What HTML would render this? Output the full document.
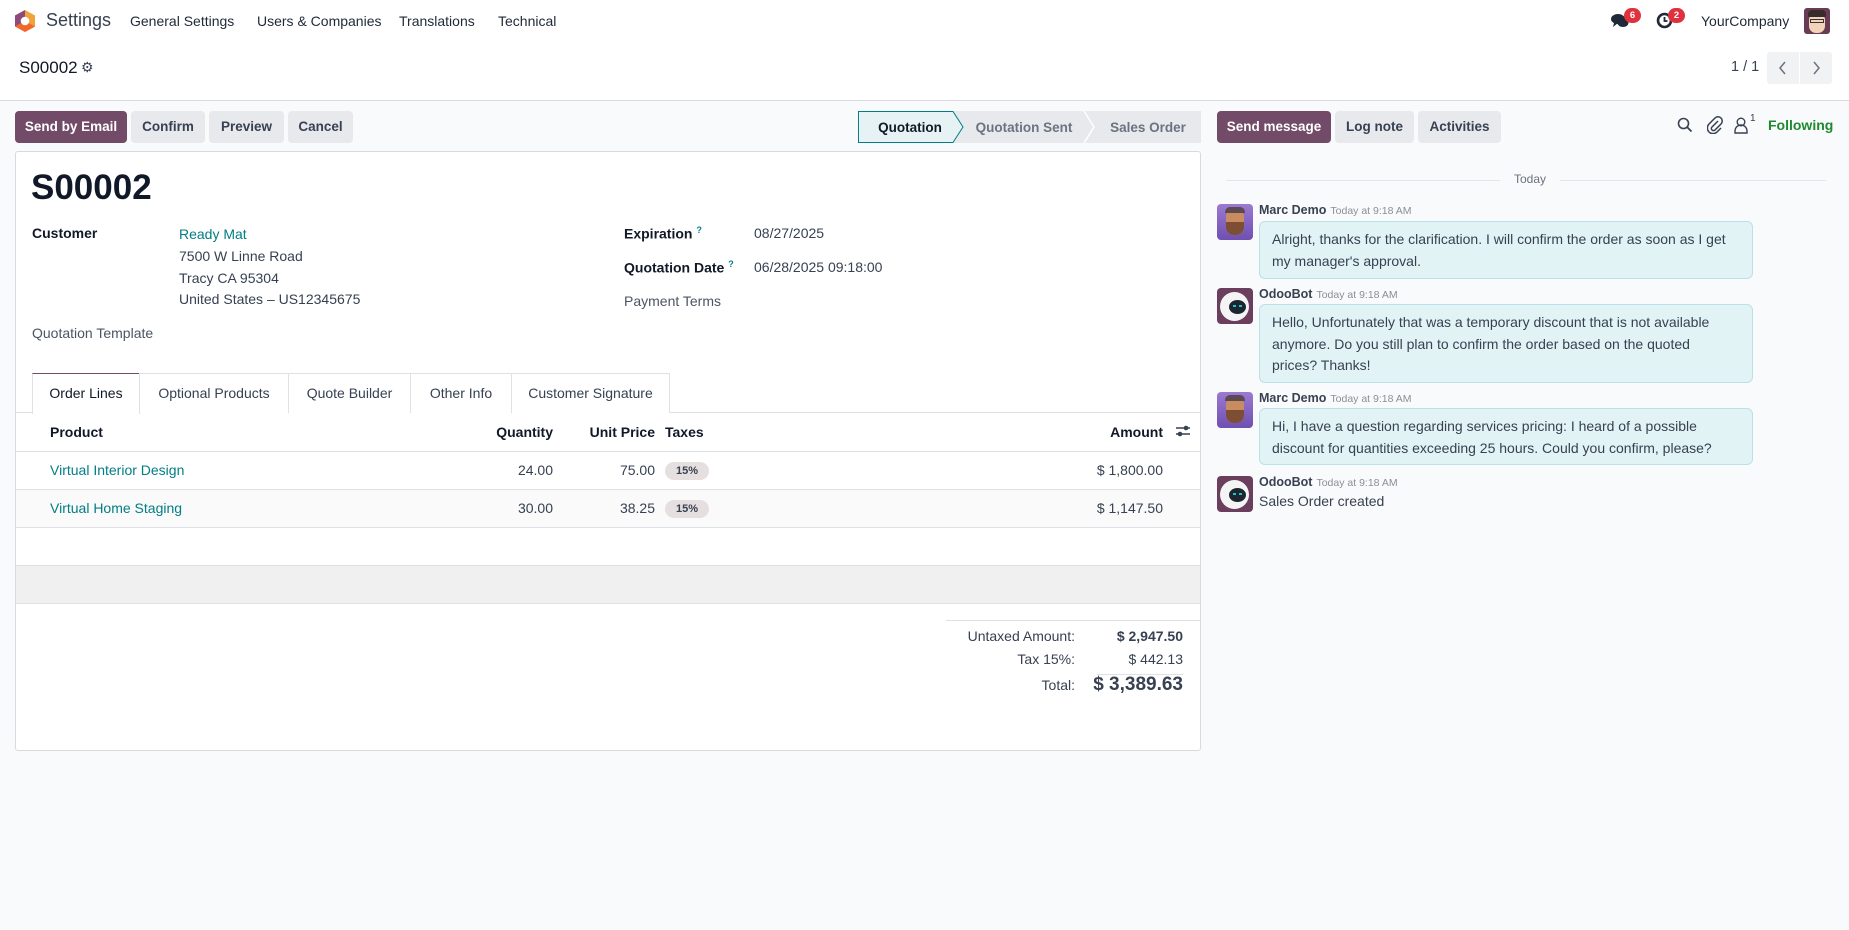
<!DOCTYPE html>
<html><head><meta charset="utf-8">
<style>
*{box-sizing:border-box;margin:0;padding:0}
body{width:1849px;height:930px;background:#f9fafb;font-family:"Liberation Sans",sans-serif;color:#374151;font-size:14px;position:relative;overflow:hidden}
.a{position:absolute;white-space:nowrap}
.top{position:absolute;left:0;top:0;width:1849px;height:101px;background:#fff;border-bottom:1px solid #d8dadd}
.btn{position:absolute;top:111px;height:32px;border-radius:4px;background:#e7e9ed;color:#374151;font-weight:bold;font-size:13.5px;line-height:32px;text-align:center}
.pr{background:#714b67;color:#fff}
.lbl{font-weight:bold;color:#111827}
.link{color:#017e84}
.tab{position:absolute;top:373px;height:40px;border:1px solid #dee2e6;border-bottom:none;line-height:38px;text-align:center;font-size:14px;color:#374151;background:#fff}
.row{position:absolute;left:16px;width:1184px;border-bottom:1px solid #dee2e6}
.tag{position:absolute;width:44px;height:18px;border-radius:9px;background:#e5dfdf;font-size:11px;font-weight:bold;line-height:18px;text-align:center;color:#374151}
.r{text-align:right}
.av{position:absolute;left:1217px;width:36px;height:36px;border-radius:4px;overflow:hidden}
.bub{position:absolute;left:1259px;width:494px;background:#e2f3f6;border:1px solid #b9e1e8;border-radius:6px;padding:7px 12px;font-size:14px;line-height:21.5px;color:#374151;white-space:nowrap}
.nm{position:absolute;left:1259px;font-weight:bold;font-size:12.5px;color:#374151}
.nm span{font-weight:normal;color:#8a8f96;font-size:10.5px;margin-left:4px}
.nav{position:absolute;top:13px;font-size:14px;color:#1f2937;white-space:nowrap}
</style></head><body>
<div class="top"></div>
<svg class="a" style="left:14px;top:9px" width="22" height="24" viewBox="0 0 22 24"><polygon points="11,1 21,6.5 21,17.5 11,23 1,17.5 1,6.5" fill="#f0a33a"/><polygon points="11,1 1,6.5 1,17.5 11,12" fill="#8f4a7d"/><polygon points="1,17.5 11,23 21,17.5 11,12" fill="#f2672a"/><circle cx="11" cy="12" r="4.3" fill="#fff"/></svg>
<div class="a" style="left:46px;top:10px;font-size:18px;color:#374151">Settings</div>
<div class="nav" style="left:130px">General Settings</div>
<div class="nav" style="left:257px">Users &amp; Companies</div>
<div class="nav" style="left:399px">Translations</div>
<div class="nav" style="left:498px">Technical</div>
<svg class="a" style="left:1611px;top:13px" width="18" height="16" viewBox="0 0 18 16"><ellipse cx="7" cy="6" rx="7" ry="5" fill="#1f2937"/><path d="M3 10 L2 14 L7 10Z" fill="#1f2937"/><ellipse cx="12" cy="10" rx="5.5" ry="4" fill="#1f2937"/></svg>
<div class="a" style="left:1624px;top:8px;width:17px;height:15px;border-radius:8px;background:#e0313f;color:#fff;font-size:9.5px;font-weight:bold;text-align:center;line-height:15px">6</div>
<svg class="a" style="left:1656px;top:12px" width="17" height="17" viewBox="0 0 17 17"><circle cx="8.5" cy="8.5" r="6.5" fill="none" stroke="#1f2937" stroke-width="2.6"/><path d="M8.5 5v4h3" stroke="#1f2937" stroke-width="1.8" fill="none"/></svg>
<div class="a" style="left:1668px;top:8px;width:17px;height:15px;border-radius:8px;background:#e0313f;color:#fff;font-size:9.5px;font-weight:bold;text-align:center;line-height:15px">2</div>
<div class="nav" style="left:1701px">YourCompany</div>
<div class="a" style="left:1804px;top:8px;width:26px;height:26px;border-radius:3px;background:#6a3b55;overflow:hidden"><div style="position:absolute;left:5px;top:5px;width:16px;height:20px;border-radius:7px;background:#f2d2b8"></div><div style="position:absolute;left:4px;top:2px;width:18px;height:7px;border-radius:4px 4px 1px 1px;background:#3a2b2b"></div><div style="position:absolute;left:6px;top:11px;width:14px;height:4px;border:1px solid #333"></div></div>
<div class="a" style="left:19px;top:58px;font-size:17px;color:#111827">S00002</div>
<div class="a" style="left:81px;top:59px;font-size:14px;color:#374151">&#9881;</div>
<div class="a" style="left:1731px;top:59px;font-size:14.5px;color:#374151">1 / 1</div>
<div class="a" style="left:1767px;top:52px;width:65px;height:32px;background:#f1f2f4;border-radius:3px"></div>
<div class="a" style="left:1799px;top:52px;width:1px;height:32px;background:#fff"></div>
<svg class="a" style="left:1777px;top:60px" width="12" height="16"><path d="M8 2 L3 8 L8 14" stroke="#6b7280" stroke-width="1.5" fill="none"/></svg>
<svg class="a" style="left:1810px;top:60px" width="12" height="16"><path d="M4 2 L9 8 L4 14" stroke="#6b7280" stroke-width="1.5" fill="none"/></svg>
<div class="btn pr" style="left:15px;width:112px">Send by Email</div>
<div class="btn" style="left:131px;width:74px">Confirm</div>
<div class="btn" style="left:209px;width:75px">Preview</div>
<div class="btn" style="left:288px;width:65px">Cancel</div>
<svg class="a" style="left:858px;top:111px" width="343" height="32" viewBox="0 0 343 32">
<rect x="0" y="0" width="343" height="32" fill="#e7e9ed"/>
<polygon points="0.5,0.5 95,0.5 105,16 95,31.5 0.5,31.5" fill="#e6f2f3" stroke="#017e84"/>
<polyline points="226,0 236,16 226,32" fill="none" stroke="#fff" stroke-width="1.5"/>
<text x="52" y="21" text-anchor="middle" font-family="Liberation Sans" font-weight="bold" font-size="13.5" fill="#111827">Quotation</text>
<text x="166" y="21" text-anchor="middle" font-family="Liberation Sans" font-weight="bold" font-size="13.5" fill="#6b7280">Quotation Sent</text>
<text x="290" y="21" text-anchor="middle" font-family="Liberation Sans" font-weight="bold" font-size="13.5" fill="#6b7280">Sales Order</text>
</svg>
<div class="a" style="left:15px;top:151px;width:1186px;height:600px;background:#fff;border:1px solid #d8dadd;border-radius:3px"></div>
<div class="a" style="left:31px;top:168px;font-size:35px;font-weight:bold;color:#111827">S00002</div>
<div class="a lbl" style="left:32px;top:225px">Customer</div>
<div class="a link" style="left:179px;top:226px">Ready Mat</div>
<div class="a" style="left:179px;top:248px">7500 W Linne Road</div>
<div class="a" style="left:179px;top:270px">Tracy CA 95304</div>
<div class="a" style="left:179px;top:291px">United States – US12345675</div>
<div class="a" style="left:32px;top:325px;color:#4b5563">Quotation Template</div>
<div class="a lbl" style="left:624px;top:225px">Expiration <sup style="color:#017e84;font-size:9px">?</sup></div>
<div class="a" style="left:754px;top:225px">08/27/2025</div>
<div class="a lbl" style="left:624px;top:259px">Quotation Date <sup style="color:#017e84;font-size:9px">?</sup></div>
<div class="a" style="left:754px;top:259px">06/28/2025 09:18:00</div>
<div class="a" style="left:624px;top:293px;color:#4b5563">Payment Terms</div>
<div class="a" style="left:16px;top:412px;width:1184px;height:1px;background:#dee2e6"></div>
<div class="tab" style="left:32px;width:108px;border-top:1px solid #714b67;height:41px;color:#111827">Order Lines</div>
<div class="tab" style="left:139px;width:150px">Optional Products</div>
<div class="tab" style="left:288px;width:123px">Quote Builder</div>
<div class="tab" style="left:410px;width:102px">Other Info</div>
<div class="tab" style="left:511px;width:159px">Customer Signature</div>
<div class="row" style="top:412px;height:40px"></div>
<div class="a lbl" style="left:50px;top:424px">Product</div>
<div class="a lbl r" style="left:453px;width:100px;top:424px">Quantity</div>
<div class="a lbl r" style="left:555px;width:100px;top:424px">Unit Price</div>
<div class="a lbl" style="left:665px;top:424px">Taxes</div>
<div class="a lbl r" style="left:1063px;width:100px;top:424px">Amount</div>
<svg class="a" style="left:1175px;top:423px" width="16" height="16" viewBox="0 0 16 16"><path d="M1 5h14M1 11h14" stroke="#374151" stroke-width="1.5"/><circle cx="11" cy="5" r="2.3" fill="#374151"/><circle cx="5" cy="11" r="2.3" fill="#374151"/></svg>
<div class="row" style="top:452px;height:38px"></div>
<div class="a link" style="left:50px;top:462px">Virtual Interior Design</div>
<div class="a r" style="left:453px;width:100px;top:462px">24.00</div>
<div class="a r" style="left:555px;width:100px;top:462px">75.00</div>
<div class="tag" style="left:665px;top:462px">15%</div>
<div class="a r" style="left:1013px;width:150px;top:462px">$ 1,800.00</div>
<div class="row" style="top:490px;height:38px;background:#fafafa"></div>
<div class="a link" style="left:50px;top:500px">Virtual Home Staging</div>
<div class="a r" style="left:453px;width:100px;top:500px">30.00</div>
<div class="a r" style="left:555px;width:100px;top:500px">38.25</div>
<div class="tag" style="left:665px;top:500px">15%</div>
<div class="a r" style="left:1013px;width:150px;top:500px">$ 1,147.50</div>
<div class="row" style="top:528px;height:38px"></div>
<div class="row" style="top:566px;height:38px;background:#f0f0f0"></div>
<div class="a" style="left:946px;top:620px;width:254px;height:1px;background:#dee2e6"></div>
<div class="a r" style="left:875px;width:200px;top:628px">Untaxed Amount:</div>
<div class="a r" style="left:1033px;width:150px;top:628px;font-weight:bold">$ 2,947.50</div>
<div class="a r" style="left:875px;width:200px;top:651px">Tax 15%:</div>
<div class="a r" style="left:1033px;width:150px;top:651px">$ 442.13</div>
<div class="a" style="left:1097px;top:674px;width:86px;height:1px;background:#dee2e6"></div>
<div class="a r" style="left:875px;width:200px;top:677px">Total:</div>
<div class="a r" style="left:1013px;width:170px;top:674px;font-size:19px;font-weight:bold">$ 3,389.63</div>
<div class="btn pr" style="left:1217px;width:114px">Send message</div>
<div class="btn" style="left:1335px;width:79px">Log note</div>
<div class="btn" style="left:1418px;width:83px">Activities</div>
<svg class="a" style="left:1677px;top:117px" width="16" height="16" viewBox="0 0 16 16"><circle cx="6.5" cy="6.5" r="5" fill="none" stroke="#374151" stroke-width="1.6"/><path d="M10 10l4.5 4.5" stroke="#374151" stroke-width="1.8"/></svg>
<svg class="a" style="left:1707px;top:116px" width="16" height="18" viewBox="0 0 16 18"><path d="M11 5 L5 11 a2 2 0 0 0 3 3 L14 8 a4 4 0 0 0 -6 -6 L2 8 a5.5 5.5 0 0 0 8 8 L14 12" fill="none" stroke="#374151" stroke-width="1.5"/></svg>
<svg class="a" style="left:1734px;top:117px" width="14" height="17" viewBox="0 0 14 17"><circle cx="7" cy="5" r="3.8" fill="none" stroke="#374151" stroke-width="1.4"/><path d="M1 16v-2a5 5 0 0 1 12 0v2z" fill="none" stroke="#374151" stroke-width="1.4"/></svg>
<div class="a" style="left:1750px;top:113px;font-size:10px">1</div>
<div class="a" style="left:1768px;top:117px;font-weight:bold;color:#1e8a2f;font-size:14px">Following</div>
<div class="a" style="left:1226px;top:180px;width:600px;height:1px;background:#e2e5e9"></div>
<div class="a" style="left:1500px;top:172px;width:60px;background:#f9fafb;text-align:center;font-size:12px;color:#6b7280">Today</div>

<div class="av" style="top:204px;background:linear-gradient(#9b7ad2,#6f4fb0)"><div style="position:absolute;left:9px;top:5px;width:18px;height:26px;border-radius:8px;background:#c98c61"></div><div style="position:absolute;left:9px;top:18px;width:18px;height:13px;border-radius:0 0 8px 8px;background:#7c4f34"></div><div style="position:absolute;left:8px;top:3px;width:20px;height:6px;border-radius:5px 5px 0 0;background:#5b4a50"></div></div>
<div class="nm" style="top:203px">Marc Demo<span>Today at 9:18 AM</span></div>
<div class="bub" style="top:221px;height:58px">Alright, thanks for the clarification. I will confirm the order as soon as I get<br>my manager's approval.</div>

<div class="av" style="top:288px;background:#6b3e5d"><div style="position:absolute;left:3px;top:4px;width:29px;height:29px;border-radius:50%;background:#f4f4f4"></div><div style="position:absolute;left:12px;top:12px;width:17px;height:14px;border-radius:50%;background:#1b2630"></div><div style="position:absolute;left:16px;top:17px;width:3px;height:2px;background:#22c3c3"></div><div style="position:absolute;left:22px;top:17px;width:3px;height:2px;background:#22c3c3"></div></div>
<div class="nm" style="top:287px">OdooBot<span>Today at 9:18 AM</span></div>
<div class="bub" style="top:304px;height:79px">Hello, Unfortunately that was a temporary discount that is not available<br>anymore. Do you still plan to confirm the order based on the quoted<br>prices? Thanks!</div>

<div class="av" style="top:392px;background:linear-gradient(#9b7ad2,#6f4fb0)"><div style="position:absolute;left:9px;top:5px;width:18px;height:26px;border-radius:8px;background:#c98c61"></div><div style="position:absolute;left:9px;top:18px;width:18px;height:13px;border-radius:0 0 8px 8px;background:#7c4f34"></div><div style="position:absolute;left:8px;top:3px;width:20px;height:6px;border-radius:5px 5px 0 0;background:#5b4a50"></div></div>
<div class="nm" style="top:391px">Marc Demo<span>Today at 9:18 AM</span></div>
<div class="bub" style="top:408px;height:57px">Hi, I have a question regarding services pricing: I heard of a possible<br>discount for quantities exceeding 25 hours. Could you confirm, please?</div>

<div class="av" style="top:476px;background:#6b3e5d"><div style="position:absolute;left:3px;top:4px;width:29px;height:29px;border-radius:50%;background:#f4f4f4"></div><div style="position:absolute;left:12px;top:12px;width:17px;height:14px;border-radius:50%;background:#1b2630"></div><div style="position:absolute;left:16px;top:17px;width:3px;height:2px;background:#22c3c3"></div><div style="position:absolute;left:22px;top:17px;width:3px;height:2px;background:#22c3c3"></div></div>
<div class="nm" style="top:475px">OdooBot<span>Today at 9:18 AM</span></div>
<div class="a" style="left:1259px;top:493px;font-size:14px">Sales Order created</div>
</body></html>
